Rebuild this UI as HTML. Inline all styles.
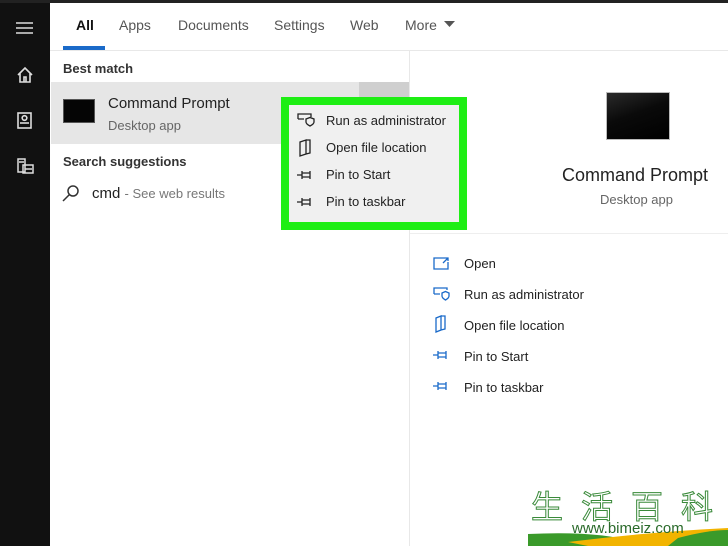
<!DOCTYPE html>
<html><head><meta charset="utf-8"><style>
*{margin:0;padding:0;box-sizing:border-box}
body{width:728px;height:546px;overflow:hidden;background:#fff;font-family:"Liberation Sans",sans-serif;position:relative;color:#222}
.a{position:absolute;white-space:nowrap}
</style></head><body>
<div class="a" style="left:0;top:0;width:50px;height:546px;background:#111"></div>
<div class="a" style="left:0;top:0;width:728px;height:3px;background:#222"></div>
<div class="a" style="left:50px;top:50px;width:678px;height:1px;background:#e8e8e8"></div>
<div class="a" style="left:409px;top:51px;width:1px;height:495px;background:#e8e8e8"></div>
<svg class="a" style="left:15px;top:20px" width="20" height="16" fill="none" stroke="#ddd" stroke-width="1.6"><path d="M1 3H18M1 8H18M1 13H18"/></svg>
<svg class="a" style="left:16px;top:66px" width="18" height="18" fill="none" stroke="#ddd" stroke-width="1.6"><path d="M2 9L9 2L16 9M4 7V16H14V7M8 16V11H10V16"/></svg>
<svg class="a" style="left:16px;top:111px" width="18" height="20" fill="none" stroke="#ddd" stroke-width="1.6"><rect x="2" y="2" width="13" height="15"/><circle cx="8.5" cy="7" r="2.3"/><path d="M4 12H13"/></svg>
<svg class="a" style="left:16px;top:157px" width="20" height="20" fill="none" stroke="#ddd" stroke-width="1.5"><rect x="2" y="2" width="7" height="13"/><rect x="7" y="8" width="10" height="8"/><path d="M3 5H8M9 12H16"/></svg>
<div class="a" style="left:76px;top:17px;font-size:14px;font-weight:bold;color:#111">All</div>
<div class="a" style="left:119px;top:17px;font-size:14px;color:#555">Apps</div>
<div class="a" style="left:178px;top:17px;font-size:14px;color:#555">Documents</div>
<div class="a" style="left:274px;top:17px;font-size:14px;color:#555">Settings</div>
<div class="a" style="left:350px;top:17px;font-size:14px;color:#555">Web</div>
<div class="a" style="left:405px;top:17px;font-size:14px;color:#555">More</div>
<svg class="a" style="left:444px;top:21px" width="12" height="8"><path d="M0 0H11L5.5 6Z" fill="#555"/></svg>
<div class="a" style="left:63px;top:46px;width:42px;height:4px;background:#1a6ac9"></div>
<div class="a" style="left:63px;top:61px;font-size:13px;font-weight:bold;color:#333">Best match</div>
<div class="a" style="left:51px;top:82px;width:358px;height:62px;background:#e6e6e6"></div>
<div class="a" style="left:359px;top:82px;width:50px;height:62px;background:#cfcfcf"></div>
<div class="a" style="left:63px;top:99px;width:32px;height:24px;background:#050505;border:1px solid #555"></div>
<div class="a" style="left:108px;top:95px;font-size:15px;color:#222">Command Prompt</div>
<div class="a" style="left:108px;top:118px;font-size:13px;color:#666">Desktop app</div>
<div class="a" style="left:63px;top:154px;font-size:13px;font-weight:bold;color:#333">Search suggestions</div>
<svg class="a" style="left:62px;top:184px" width="18" height="18" fill="none" stroke="#333" stroke-width="1.5"><circle cx="11" cy="7" r="5"/><path d="M7.5 10.5L1 17"/></svg>
<div class="a" style="left:92px;top:185px;font-size:15px;color:#222">cmd <span style="font-size:13px;color:#777">- See web results</span></div>
<div class="a" style="left:281px;top:97px;width:186px;height:133px;border:8px solid #1eee14;background:#f0f0f0"></div>
<div class="a" style="left:326px;top:107px;font-size:13px;color:#222;line-height:27px">Run as administrator<br>Open file location<br>Pin to Start<br>Pin to taskbar</div>
<svg class="a" style="left:296px;top:106px" width="22" height="110" fill="none" stroke="#222" stroke-width="1.3">
<path d="M2 13V8H15V11M2 13H8"/><path d="M10 13L14 11.5L18 13V16C18 18 14 20 14 20C14 20 10 18 10 16Z"/>
<path d="M4 36L10 34V48L4 50Z M10 34H14V47L10 48"/>
<path d="M1 69H6M6 65V73M6 67H14V71H6M14 65V73"/>
<path d="M1 96H6M6 92V100M6 94H14V98H6M14 92V100"/>
</svg>
<div class="a" style="left:606px;top:92px;width:64px;height:48px;background:linear-gradient(160deg,#2a2a2a 0%,#0a0a0a 45%,#000 100%);border:1px solid #bbb"></div>
<div class="a" style="left:562px;top:165px;font-size:18px;color:#222">Command Prompt</div>
<div class="a" style="left:600px;top:192px;font-size:13px;color:#666">Desktop app</div>
<div class="a" style="left:410px;top:233px;width:318px;height:1px;background:#eee"></div>
<div class="a" style="left:464px;top:248px;font-size:13px;color:#222;line-height:31px">Open<br>Run as administrator<br>Open file location<br>Pin to Start<br>Pin to taskbar</div>
<svg class="a" style="left:432px;top:255px" width="22" height="140" fill="none" stroke="#1a6ac9" stroke-width="1.3">
<path d="M12 3H2V14H16V7M12 3H16V6M16 3L11 8"/>
<path d="M2 39V33H15V35M2 39H8"/><path d="M10 38L13.5 36.5L17 38V41C17 43 13.5 45 13.5 45C13.5 45 10 43 10 41Z"/>
<path d="M4 63L9 61V75L4 77Z M9 61H13V74L9 75"/>
<path d="M1 100H6M6 96V104M6 98H14V102H6M14 96V104"/>
<path d="M1 131H6M6 127V135M6 129H14V133H6M14 127V135"/>
</svg>
<div class="a" style="left:528px;top:484px;width:200px;height:62px;background:#fff"></div>
<svg class="a" style="left:528px;top:526px" width="200" height="20"><path d="M0 8Q80 4 120 20H0Z" fill="#3a9a2a"/><path d="M40 16Q120 6 200 2V20H60Z" fill="#f2b400"/><path d="M150 12Q180 4 200 4V20H140Z" fill="#3a9a2a"/></svg>
<div class="a" style="left:531px;top:487px;font-size:32px;color:#fff;-webkit-text-stroke:1px #3a8a3a;font-family:'Noto Sans CJK SC',sans-serif;letter-spacing:18px;line-height:36px">生活百科</div>
<div class="a" style="left:572px;top:520px;font-size:15px;color:#2a6a2a">www.bimeiz.com</div>
</body></html>
